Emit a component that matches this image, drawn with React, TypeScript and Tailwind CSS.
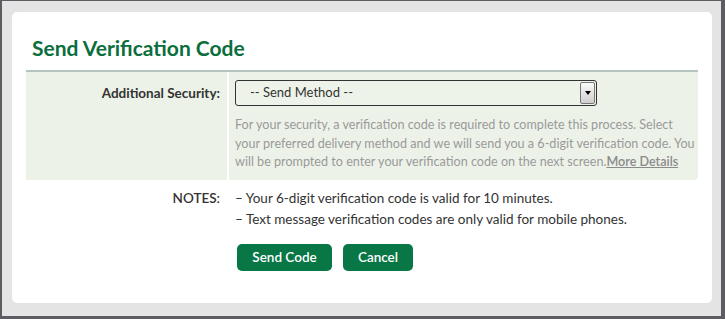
const font = { fontFamily: 'Lato, "Open Sans", "Liberation Sans", sans-serif' };

function SelectBox() {
  return (
    <div className="relative flex h-[26px] w-[362px] items-center rounded-[3px] border border-[#333] bg-[#eef3ea] pl-[14px] text-[13px] text-[#333]">
      <span>-- Send Method --</span>
      <div className="absolute right-[1px] top-[1px] flex h-[22px] w-[15px] items-center justify-center rounded-[2px] border border-[#777] bg-gradient-to-b from-[#fafafa] to-[#cfcfcf]">
        <span className="h-0 w-0 border-x-[3.5px] border-t-[4px] border-x-transparent border-t-black" />
      </div>
    </div>
  );
}

export default function App() {
  return (
    <div
      style={font}
      className="h-[319px] w-[725px] border-b-[3px] border-l-2 border-r-4 border-t border-[#5c5c62] bg-[#e4e4e4] pb-[13px] pl-[10px] pr-[9px] pt-[11px]"
    >
      <div className="h-full w-full rounded-[5px] bg-white">
        {/* Header */}
        <div className="h-[58px] pl-[20px] pt-[23px]">
          <h1 className="text-[21px] font-bold leading-[25px] text-[#0b6e3d]">Send Verification Code</h1>
        </div>
        <div className="mx-[14px] h-[2px] bg-[#b5c5bd]" />

        {/* Security row */}
        <div className="mx-[14px] flex gap-[2px]">
          <div className="w-[201px] shrink-0 bg-[#edf2e9] pr-[7px] pt-[12px] text-right text-[13.5px] font-bold leading-[18px] text-[#333]">
            Additional Security:
          </div>
          <div className="min-w-0 flex-1 rounded-br-[4px] bg-[#edf2e9] pb-[8px] pl-[6px] pt-[8px]">
            <SelectBox />
            <p className="mt-[10px] whitespace-nowrap text-[12.6px] leading-[18.5px] text-[#9a9a9a]">
              For your security, a verification code is required to complete this process. Select
              <br />
              your preferred delivery method and we will send you a 6-digit verification code. You
              <br />
              will be prompted to enter your verification code on the next screen.
              <a href="#" className="font-semibold text-[#8a8a8a] underline">
                More Details
              </a>
            </p>
          </div>
        </div>

        {/* Notes */}
        <div className="mx-[14px] mt-[8px] flex gap-[2px] text-[13.5px] leading-[21px] text-[#333]">
          <div className="w-[201px] shrink-0 pr-[7px] text-right font-semibold">NOTES:</div>
          <div className="pl-[6px]">
            <div>– Your 6-digit verification code is valid for 10 minutes.</div>
            <div>– Text message verification codes are only valid for mobile phones.</div>
            <div className="mt-[14px] flex gap-[11px] pl-[2px]">
              <button className="h-[27px] w-[95px] rounded-[5px] bg-[#087745] text-[13.5px] font-semibold text-white">
                Send Code
              </button>
              <button className="h-[27px] w-[70px] rounded-[5px] bg-[#087745] text-[13.5px] font-semibold text-white">
                Cancel
              </button>
            </div>
          </div>
        </div>
      </div>
    </div>
  );
}
